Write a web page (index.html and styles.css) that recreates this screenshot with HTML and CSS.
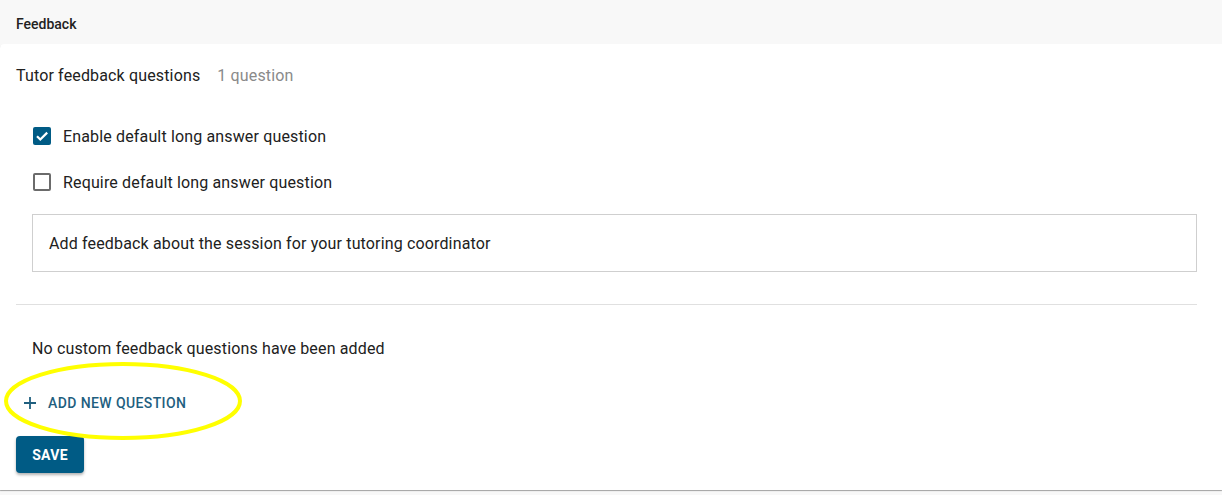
FILE: index.html
```html
<!DOCTYPE html>
<html>
<head>
<meta charset="utf-8">
<link rel="stylesheet" href="styles.css">
</head>
<body>
<div class="page">
  <header class="page-header">Feedback</header>
  <section class="card">
    <div class="title-row">
      <span class="title">Tutor feedback questions</span>
      <span class="count">1 question</span>
    </div>
    <div class="defaults">
      <div class="checks">
        <label class="check-row">
          <span class="box checked">
            <svg viewBox="0 0 18 18" width="18" height="18"><path d="M4 9.2l3.3 3.3L14.2 5.6" fill="none" stroke="#fff" stroke-width="2.2"/></svg>
          </span>
          <span class="check-label">Enable default long answer question</span>
        </label>
        <label class="check-row">
          <span class="box"></span>
          <span class="check-label">Require default long answer question</span>
        </label>
      </div>
      <div class="field">Add feedback about the session for your tutoring coordinator</div>
    </div>
    <hr class="divider">
    <div class="custom">
      <p class="empty">No custom feedback questions have been added</p>
      <button class="add-btn">
        <svg viewBox="0 0 12 12" width="12" height="12"><path d="M6 0v12M0 6h12" stroke="#1f5f7f" stroke-width="1.8" fill="none"/></svg>
        <span>ADD NEW QUESTION</span>
      </button>
    </div>
    <button class="save-btn">SAVE</button>
  </section>
  <svg class="highlight" width="246" height="84" viewBox="0 0 246 84">
    <ellipse cx="121" cy="40" rx="117" ry="37" fill="none" stroke="#ffff00" stroke-width="4"/>
  </svg>
</div>
</body>
</html>
```
FILE: styles.css
```css
html, body {
  margin: 0;
  padding: 0;
  background: #f8f8f8;
  font-family: Roboto, "Liberation Sans", sans-serif;
  color: #212121;
}
.page {
  position: relative;
  width: 1222px;
  height: 495px;
}
.page-header {
  height: 44px;
  box-sizing: border-box;
  padding: 16px 16px 0;
  font-size: 14px;
  line-height: 16px;
  font-weight: 500;
  color: #222;
}
.card {
  background: #fff;
  border-radius: 4px 0 0 0;
  height: 446px;
  box-sizing: border-box;
  padding: 20px 25px 0 16px;
  box-shadow: 0 1px 1px rgba(0,0,0,0.35);
  letter-spacing: 0.15px;
}
.title-row {
  display: flex;
  gap: 17px;
  font-size: 16px;
  line-height: 24px;
}
.count {
  color: #8a8a8a;
}
.defaults {
  padding: 36px 0 0 16px;
  display: flex;
  flex-direction: column;
  gap: 20px;
}
.checks {
  display: flex;
  flex-direction: column;
  gap: 22px;
}
.check-row {
  display: flex;
  align-items: center;
  gap: 12px;
  height: 24px;
  font-size: 16px;
  padding-left: 1px;
}
.box {
  width: 18px;
  height: 18px;
  box-sizing: border-box;
  border: 2px solid #6b6b6b;
  border-radius: 2px;
  display: flex;
}
.box.checked {
  border: none;
  background: #005b85;
}
.field {
  height: 58px;
  box-sizing: border-box;
  border: 1px solid #cfcfcf;
  padding: 0 16px;
  display: flex;
  align-items: center;
  font-size: 16px;
}
.divider {
  border: none;
  border-top: 1px solid #e0e0e0;
  margin: 32px 0 0;
}
.custom {
  padding-left: 16px;
}
.empty {
  margin: 32px 0 0;
  font-size: 16px;
  line-height: 24px;
}
.add-btn {
  margin: 24px 0 0 -16px;
  padding: 0 8px;
  display: flex;
  align-items: center;
  gap: 12px;
  background: none;
  border: none;
  font-family: inherit;
  font-size: 14px;
  font-weight: 500;
  letter-spacing: 0.4px;
  color: #1f5f7f;
  height: 36px;
}
.save-btn {
  margin-top: 15px;
  width: 68px;
  height: 37px;
  border: none;
  border-radius: 4px;
  background: #005b85;
  color: #fff;
  font-family: inherit;
  font-size: 14px;
  font-weight: 700;
  letter-spacing: 0.3px;
  box-shadow: 0 2px 3px rgba(0,0,0,0.3);
}
.highlight {
  position: absolute;
  left: 2px;
  top: 361px;
}
```
